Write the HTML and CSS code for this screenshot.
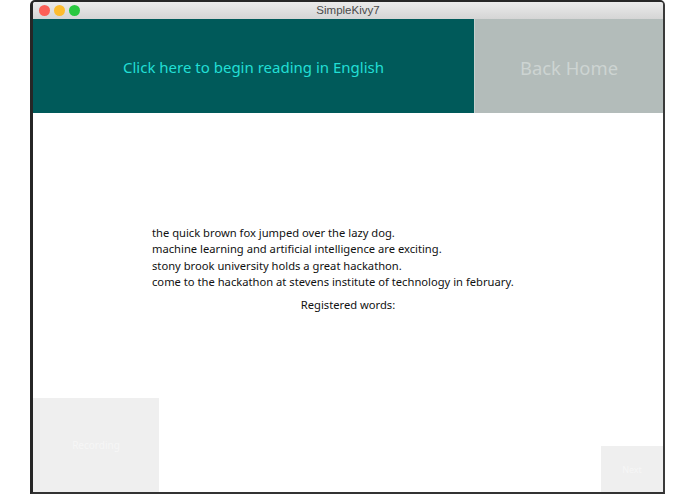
FILE: index.html
```html
<!DOCTYPE html>
<html>
<head>
<meta charset="utf-8">
<title>SimpleKivy7</title>
<link rel="stylesheet" href="styles.css">
</head>
<body>
<div class="window">
  <div class="titlebar">
    <div class="lights">
      <span class="light red"></span>
      <span class="light yellow"></span>
      <span class="light green"></span>
    </div>
    <div class="title">SimpleKivy7</div>
  </div>
  <div class="header">
    <div class="btn-read">Click here to begin reading in English</div>
    <div class="btn-home">Back Home</div>
  </div>
  <div class="main">
    <div class="reading">
      <div class="lines">
        <div>the quick brown fox jumped over the lazy dog.</div>
        <div>machine learning and artificial intelligence are exciting.</div>
        <div>stony brook university holds a great hackathon.</div>
        <div>come to the hackathon at stevens institute of technology in february.</div>
      </div>
      <div class="registered">Registered words:</div>
    </div>
    <div class="bottom">
      <div class="box-left">Recording</div>
      <div class="box-right">Next</div>
    </div>
  </div>
</div>
</body>
</html>
```

FILE: styles.css
```css
html, body {
  margin: 0;
  padding: 0;
  background: #ffffff;
  width: 695px;
  height: 494px;
  overflow: hidden;
}

.window {
  margin-left: 30px;
  width: 630px;
  height: 490px;
  border-top: 2px solid #262626;
  border-left: 3px solid #262626;
  border-right: 2px solid #3a3a3a;
  border-bottom: 2px solid #333333;
  border-radius: 5px 5px 0 0;
  display: flex;
  flex-direction: column;
  overflow: hidden;
  background: #ffffff;
}

.titlebar {
  height: 17px;
  flex: none;
  background: linear-gradient(#ebebeb, #d5d5d5);
  display: flex;
  align-items: center;
  position: relative;
}

.lights {
  display: flex;
  gap: 4px;
  padding-left: 6px;
}

.light {
  width: 11px;
  height: 11px;
  border-radius: 50%;
  display: block;
}
.red { background: #fc5f57; }
.yellow { background: #fdbc2e; }
.green { background: #29c840; }

.title {
  position: absolute;
  left: 0;
  right: 0;
  top: 0;
  height: 17px;
  line-height: 17px;
  text-align: center;
  font-family: "Liberation Sans", Arial, sans-serif;
  font-size: 11.5px;
  color: #4a4a4a;
}

.header {
  height: 94px;
  flex: none;
  display: flex;
}

.btn-read {
  width: 441px;
  background: #005a5a;
  color: #22dfd5;
  display: flex;
  align-items: center;
  justify-content: center;
  padding-top: 2px;
  box-sizing: border-box;
  font-family: "Noto Sans", sans-serif;
  font-size: 15px;
}

.btn-home {
  flex: 1;
  background: #b3bcba;
  border-left: 1px solid #c6cfcd;
  color: #cdd4d2;
  display: flex;
  align-items: center;
  justify-content: center;
  padding-top: 2px;
  box-sizing: border-box;
  font-family: "Noto Sans", sans-serif;
  font-size: 18.4px;
}

.main {
  flex: 1;
  display: flex;
  flex-direction: column;
  justify-content: space-between;
}

.reading {
  padding-top: 112px;
  font-family: "Noto Sans", sans-serif;
  font-size: 11.2px;
  color: #111111;
}

.lines {
  padding-left: 119px;
  line-height: 16.3px;
}

.registered {
  text-align: center;
  margin-top: 7px;
  line-height: 16px;
}

.bottom {
  display: flex;
  justify-content: space-between;
  align-items: flex-end;
}

.box-left {
  width: 126px;
  height: 94px;
  background: #efefef;
  color: #f6f6f6;
  font-family: "Noto Sans", sans-serif;
  font-size: 10px;
  display: flex;
  align-items: center;
  justify-content: center;
}

.box-right {
  width: 62px;
  height: 46px;
  background: #efefef;
  color: #f6f6f6;
  font-family: "Noto Sans", sans-serif;
  font-size: 9px;
  display: flex;
  align-items: center;
  justify-content: center;
}
```
